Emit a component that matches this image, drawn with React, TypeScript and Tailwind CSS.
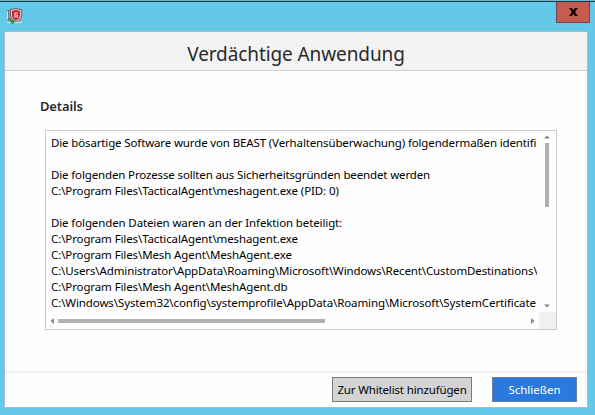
const lines: { text: string; tracking: string }[] = [
  { text: 'Die bösartige Software wurde von BEAST (Verhaltensüberwachung) folgendermaßen identifi', tracking: 'tracking-[-0.137px]' },
  { text: '', tracking: '' },
  { text: 'Die folgenden Prozesse sollten aus Sicherheitsgründen beendet werden', tracking: 'tracking-[-0.14px]' },
  { text: 'C:\\Program Files\\TacticalAgent\\meshagent.exe (PID: 0)', tracking: 'tracking-[-0.11px]' },
  { text: '', tracking: '' },
  { text: 'Die folgenden Dateien waren an der Infektion beteiligt:', tracking: 'tracking-[-0.12px]' },
  { text: 'C:\\Program Files\\TacticalAgent\\meshagent.exe', tracking: 'tracking-[-0.11px]' },
  { text: 'C:\\Program Files\\Mesh Agent\\MeshAgent.exe', tracking: 'tracking-[-0.11px]' },
  { text: 'C:\\Users\\Administrator\\AppData\\Roaming\\Microsoft\\Windows\\Recent\\CustomDestinations\\', tracking: 'tracking-[-0.115px]' },
  { text: 'C:\\Program Files\\Mesh Agent\\MeshAgent.db', tracking: 'tracking-[-0.11px]' },
  { text: 'C:\\Windows\\System32\\config\\systemprofile\\AppData\\Roaming\\Microsoft\\SystemCertificate', tracking: 'tracking-[-0.1px]' },
];

function ShieldIcon() {
  return (
    <svg width="17" height="17" viewBox="0 0 17 17" className="ml-[6px] mt-[6px]">
      <path d="M0.5 2.5 L5 1 V12 L2 13 Z" fill="#786d72" />
      <path d="M1.5 3 V11 M4 2 V10" stroke="#e4dcd6" strokeWidth="1" />
      <path d="M4.5 1.5 L10 0.5 L15.8 1.8 V8 Q15 12 10.5 14 Q5.5 12 4.5 8 Z" fill="#d9c9cd" stroke="#6f5b62" strokeWidth="1" />
      <path d="M6 3 L10 2 L14 3 V8 Q13 11 10 12.5 Q7 11 6 8 Z" fill="#c4253b" />
      <path d="M12 5 H9 V9 H11.5 V7.3 H10.2" fill="none" stroke="#f8dfe2" strokeWidth="1.1" />
      <path d="M0.5 14.5 H16" stroke="#d5ddd1" strokeWidth="1.2" />
      <path d="M3.5 13 L6 11.5 L9 13.5 L6.5 16.5 Z" fill="#31953c" />
    </svg>
  );
}

export default function App() {
  return (
    <div className="h-[415px] w-[595px] overflow-hidden bg-[#64c8e8] font-['Noto_Sans','Open_Sans',sans-serif] text-[#1c1c1c]">
      <div className="flex h-[31px] items-start justify-between border-t border-[#6fb5cc] bg-[#64c8e8]">
        <div className="flex h-[30px] w-full justify-between border-t border-[#1f3a44]">
          <ShieldIcon />
          <button className="mr-[5px] flex h-[21px] w-[34px] items-center justify-center border border-t-0 border-[#6b4551] bg-[#c75b52]">
            <svg width="9" height="8" viewBox="0 0 9 8">
              <path d="M0 0 H3 L4.5 2 L6 0 H9 L6 4 L9 8 H6 L4.5 6 L3 8 H0 L3 4 Z" fill="#160808" />
            </svg>
          </button>
        </div>
      </div>
      <div className="ml-1 flex h-[377px] w-[584px] flex-col border border-[#a5bdc6] bg-[#fefefe]">
        <header className="flex h-[39px] shrink-0 items-center justify-center border-b border-[#d0d0d0] bg-[#f3f3f3] pt-[5px]">
          <h1 className="whitespace-nowrap text-[19px] leading-6 tracking-[-0.1px] text-[#2a2a2a]">Verdächtige Anwendung</h1>
        </header>
        <main className="flex h-[300px] shrink-0 flex-col pl-[35px] pt-[25px]">
          <h2 className="h-[20px] text-[13px] font-semibold leading-5 tracking-[-0.15px] text-[#2a2a2a]">Details</h2>
          <div className="ml-[5px] mt-[14px] flex h-[200px] w-[512px] flex-col border border-[#cbcbcb]">
            <div className="flex h-[181px]">
              <div className="w-[491px] overflow-hidden pl-[5px] pt-1 text-[11.5px] leading-4 text-black">
                {lines.map((line, i) => (
                  <div key={i} className="h-4 whitespace-nowrap">
                    <span className={line.tracking}>{line.text}</span>
                  </div>
                ))}
              </div>
              <div className="flex w-[19px] flex-col items-center pt-1">
                <svg width="6" height="4" viewBox="0 0 6 4"><path d="M0 3.5 L3 0.5 L6 3.5 Z" fill="#858585" /></svg>
                <div className="mt-1 h-[64px] w-1 bg-[#b0b0b0]" />
                <svg width="6" height="4" viewBox="0 0 6 4" className="mt-[97px]"><path d="M0 0.5 L3 3.5 L6 0.5 Z" fill="#858585" /></svg>
              </div>
            </div>
            <div className="flex h-[17px] items-center">
              <svg width="4" height="6" viewBox="0 0 4 6" className="ml-1"><path d="M4 0 L0.5 3 L4 6 Z" fill="#858585" /></svg>
              <div className="ml-1 h-1 w-[267px] bg-[#b0b0b0]" />
              <svg width="4" height="6" viewBox="0 0 4 6" className="ml-[206px]"><path d="M0 0 L3.5 3 L0 6 Z" fill="#858585" /></svg>
              <div className="ml-auto h-[17px] w-[17px] bg-[#f0f0f0]" />
            </div>
          </div>
        </main>
        <footer className="flex grow items-start justify-end gap-[20px] border-t-2 border-[#efefef] pr-[10px] pt-1 text-[11.5px]">
          <button className="flex h-[25px] w-[140px] items-center justify-center whitespace-nowrap border border-[#7c7c7c] bg-[#d4d4d4] tracking-[-0.15px] text-black">Zur Whitelist hinzufügen</button>
          <button className="flex h-[25px] w-[85px] items-center justify-center border border-[#6d7f9b] bg-[#2a79de] text-white">Schließen</button>
        </footer>
      </div>
    </div>
  );
}
